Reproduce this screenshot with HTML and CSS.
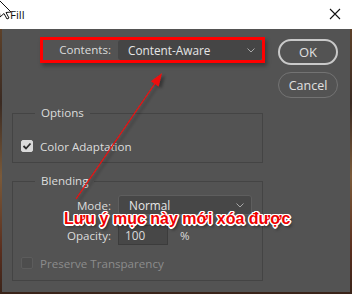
FILE: index.html
```html
<!DOCTYPE html>
<html lang="vi">
<head>
    <meta charset="UTF-8">
    <title>Fill</title>
    <link rel="stylesheet" href="styles.css">
</head>
<body>
    <div class="titlebar">
        <span class="title">Fill</span>
        <svg class="close" width="12" height="12" viewBox="0 0 12 12">
            <path d="M1 1 L11 11 M11 1 L1 11" stroke="#111" stroke-width="1.1" fill="none"/>
        </svg>
    </div>

    <div class="dialog">
        <div class="main">
            <div class="contents-row">
                <span class="contents-label">Contents:</span>
                <div class="select select-contents">
                    <span>Content-Aware</span>
                    <svg width="8" height="5" viewBox="0 0 8 5"><path d="M0.5 0.5 L4 4 L7.5 0.5" stroke="#a8a8a8" fill="none"/></svg>
                </div>
            </div>

            <fieldset class="group group-options">
                <legend>Options</legend>
                <div class="check-row">
                    <span class="checkbox checked">
                        <svg width="10" height="10" viewBox="0 0 10 10"><path d="M1.5 5 L4 7.5 L8.5 2.5" stroke="#2b2b2b" stroke-width="1.8" fill="none"/></svg>
                    </span>
                    <span>Color Adaptation</span>
                </div>
            </fieldset>

            <fieldset class="group group-blending">
                <legend>Blending</legend>
                <div class="field-row">
                    <span class="field-label">Mode:</span>
                    <div class="select select-mode">
                        <span>Normal</span>
                        <svg width="8" height="5" viewBox="0 0 8 5"><path d="M0.5 0.5 L4 4 L7.5 0.5" stroke="#a8a8a8" fill="none"/></svg>
                    </div>
                </div>
                <div class="field-row row-opacity">
                    <span class="field-label">Opacity:</span>
                    <div class="number-input">100</div>
                    <span class="unit">%</span>
                </div>
                <div class="check-row row-disabled">
                    <span class="checkbox"></span>
                    <span>Preserve Transparency</span>
                </div>
            </fieldset>
        </div>

        <div class="buttons">
            <div class="btn btn-ok">OK</div>
            <div class="btn">Cancel</div>
        </div>
    </div>

    <!-- annotations drawn over the dialog -->
    <svg class="arrow" width="352" height="294" viewBox="0 0 352 294">
        <defs>
            <filter id="shadow" x="-20%" y="-20%" width="140%" height="140%">
                <feDropShadow dx="3" dy="2" stdDeviation="1.5" flood-color="#000" flood-opacity="0.35"/>
            </filter>
        </defs>
        <g filter="url(#shadow)">
            <line x1="76" y1="199" x2="156" y2="82" stroke="#f01010" stroke-width="1.3"/>
            <polygon points="162,73 158.6,86.6 150.8,81.2" fill="#f01010"/>
        </g>
    </svg>
    <div class="note">Lưu ý mục này mới xóa được</div>

    <svg class="cursor" width="14" height="20" viewBox="0 0 14 20">
        <path d="M-2 -1 L11 12 L6 12.5 L9 18 L7 19 L4 13.5 L0 17 Z" fill="#fff" stroke="#111" stroke-width="1"/>
    </svg>
</body>
</html>
```

FILE: styles.css
```css
body {
    margin: 0;
    width: 352px;
    height: 294px;
    overflow: hidden;
    position: relative;
    font-family: "Open Sans", "Noto Sans", sans-serif;
    font-size: 11.6px;
    color: #dcdcdc;
    background: linear-gradient(180deg, #6b4a2c 0%, #3a2a22 35%, #7a5a3a 60%, #5a2e1e 85%, #3a241a 100%);
}
.titlebar {
    height: 29px;
    background: #fff;
    display: flex;
    align-items: center;
    justify-content: space-between;
    padding: 0 11px 0 10px;
}
.title {
    color: #111;
    font-size: 11.5px;
    margin-top: -1px;
}
.close {
    margin-top: -2px;
}
.dialog {
    margin: 0 2px;
    height: 263px;
    background: #535353;
    display: flex;
    box-sizing: border-box;
    padding: 8px 12px 0 10px;
}
.main {
    width: 251px;
}
.contents-row {
    width: 225px;
    height: 26px;
    margin-left: 28px;
    box-sizing: border-box;
    border: 3px solid #ff0000;
    display: flex;
    box-shadow: 2px 3px 4px rgba(0,0,0,0.3);
}
.contents-label {
    width: 75px;
    text-align: right;
    padding-right: 7px;
    line-height: 20px;
    box-sizing: border-box;
}
.select {
    display: flex;
    align-items: center;
    justify-content: space-between;
    background: #454545;
    border-radius: 3px;
    box-sizing: border-box;
    padding: 0 7px 0 10px;
    font-size: 11.8px;
    color: #e6e6e6;
}
.select-contents {
    flex: 1;
    height: 20px;
}
.group {
    margin: 0;
    border: 1px solid #444;
    padding: 0 8px;
    min-width: 0;
}
.group legend {
    padding: 0 6px;
    margin-left: 14px;
    line-height: 16px;
}
.group-options {
    margin-top: 42px;
    padding-top: 17px;
    padding-bottom: 8px;
}
.group-blending {
    margin-top: 10px;
    padding-top: 6px;
    padding-bottom: 9px;
}
.check-row {
    display: flex;
    align-items: center;
    gap: 7px;
    height: 16px;
}
.checkbox {
    width: 12px;
    height: 12px;
    box-sizing: border-box;
    border-radius: 2px;
    background: #4d4d4d;
    border: 1px solid #5c5c5c;
    display: flex;
    align-items: center;
    justify-content: center;
}
.checkbox.checked {
    background: #dadada;
    border-color: #dadada;
}
.field-row {
    display: flex;
    align-items: center;
    height: 20px;
}
.field-label {
    width: 90px;
    text-align: right;
    margin-right: 7px;
}
.select-mode {
    width: 134px;
    height: 20px;
    border: 1px solid #5e5e5e;
    background: #474747;
}
.row-opacity {
    margin-top: 10px;
}
.number-input {
    width: 50px;
    height: 20px;
    box-sizing: border-box;
    background: #474747;
    border: 1px solid #3c3c3c;
    padding-left: 6px;
    line-height: 18px;
    font-size: 11.8px;
}
.unit {
    margin-left: 12px;
}
.row-disabled {
    margin-top: 10px;
    color: #8c8c8c;
}
.buttons {
    margin-left: 15px;
    padding-top: 2px;
    display: flex;
    flex-direction: column;
    gap: 7px;
}
.btn {
    width: 60px;
    height: 26px;
    box-sizing: border-box;
    border: 1px solid #737373;
    border-radius: 13px;
    display: flex;
    align-items: center;
    justify-content: center;
    font-size: 12.5px;
    color: #e0e0e0;
}
.btn-ok {
    border: 2px solid #c9c9c9;
    font-size: 13px;
}
.arrow {
    position: absolute;
    left: 0;
    top: 0;
    pointer-events: none;
}
.note {
    position: absolute;
    left: 64px;
    top: 210px;
    font-family: "Liberation Sans", Arial, sans-serif;
    font-weight: bold;
    font-size: 16px;
    line-height: 18px;
    color: #f00000;
    white-space: nowrap;
    text-shadow: -1px -1px 0 #fff, 1px -1px 0 #fff, -1px 1px 0 #fff, 1px 1px 0 #fff,
        0 -1.5px 0 #fff, 0 1.5px 0 #fff, -1.5px 0 0 #fff, 1.5px 0 0 #fff,
        2px 3px 3px rgba(0,0,0,0.5);
}
.cursor {
    position: absolute;
    left: 0;
    top: 0;
}
```
